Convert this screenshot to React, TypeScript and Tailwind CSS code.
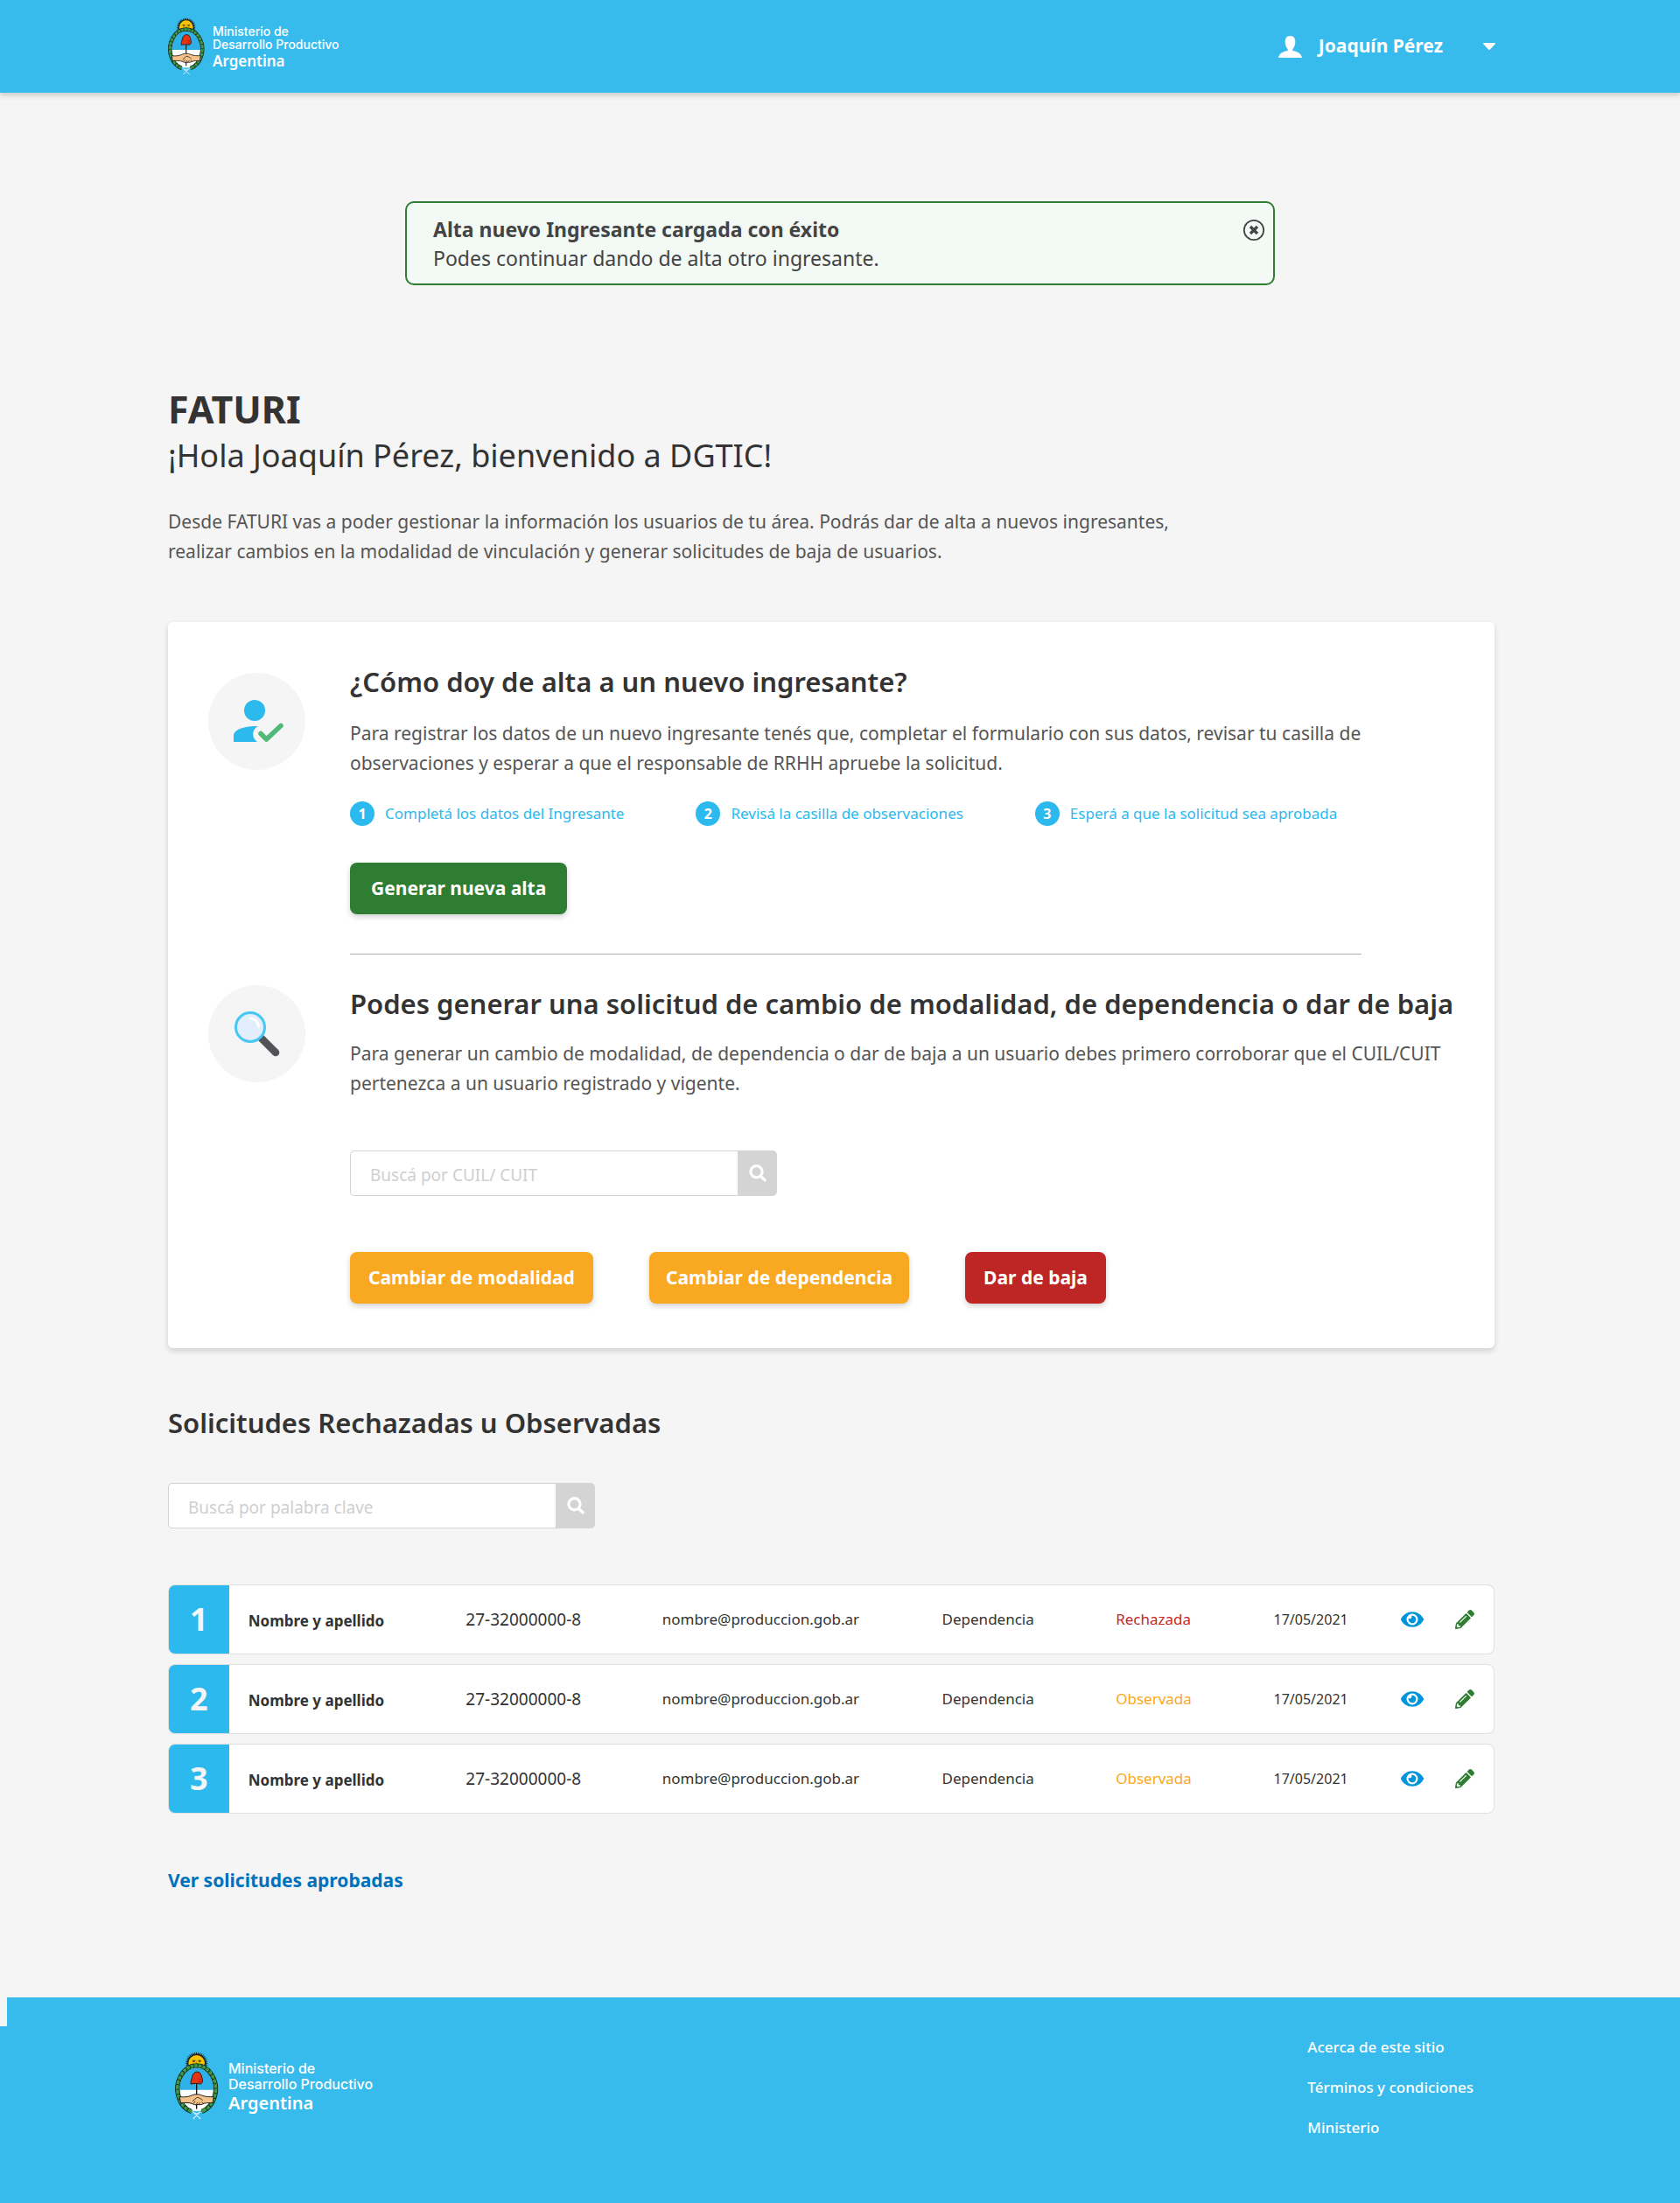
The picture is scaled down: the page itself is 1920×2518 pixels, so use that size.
import type { ReactNode } from "react";
import { FaEye, FaPencilAlt } from "react-icons/fa";

const leaves = Array.from({ length: 30 }, (_, i) => {
  const angle = ((i + 0.5) / 30) * 2 * Math.PI;
  return {
    x: 74 + 66 * Math.sin(angle),
    y: 129 - 81 * Math.cos(angle),
    turn: (angle * 180) / Math.PI,
  };
}).filter((leaf) => leaf.y < 206);

const rays = Array.from({ length: 23 }, (_, i) => -110 + i * 10);

function Emblem({ className }: { className: string }) {
  return (
    <svg viewBox="0 0 150 236" className={className} aria-hidden="true">
      {rays.map((turn) => (
        <path key={turn} d="M70.5 14 L74 0 L77.5 14 Z" fill="#111" transform={`rotate(${turn} 74 40)`} />
      ))}
      <circle cx="74" cy="40" r="31" fill="#2b2410" />
      <circle cx="74" cy="40" r="28" fill="#f8c300" />
      <path d="M59 31h11M79 31h11M61 35h7M81 35h7" stroke="#1a1a1a" strokeWidth="2.5" />
      <path d="M74 32v7" stroke="#a87800" strokeWidth="2" />
      <ellipse cx="74" cy="129" rx="59" ry="77" fill="#fff" />
      <path d="M15 132a59 77 0 0 1 118 0z" fill="#2fb1e8" />
      <path d="M56 207a66 81 0 1 1 36 0" fill="none" stroke="#10251b" strokeWidth="16" />
      <path d="M56 207a66 81 0 1 1 36 0" fill="none" stroke="#3f9a4a" strokeWidth="11" />
      {leaves.map((leaf) => (
        <path
          key={leaf.turn}
          d="M-5 -6 L0 0 L-5 6"
          fill="none"
          stroke="#10251b"
          strokeWidth="2.5"
          transform={`translate(${leaf.x} ${leaf.y}) rotate(${leaf.turn})`}
        />
      ))}
      <path d="M74 110v88" stroke="#111" strokeWidth="4" />
      <path
        d="M54 112c-1-8 2-12 4-22 2-13 9-20 18-20 8 0 13 6 15 14 1 6 4 12 4 18-1 5-4 9-8 10-12-3-22-2-33 0z"
        fill="#e63413"
        stroke="#1a1a1a"
        strokeWidth="3"
      />
      <path d="M80 92c4 4 7 4 11 4M78 102c5 3 9 3 13 2" fill="none" stroke="#7a1206" strokeWidth="2" />
      <path
        d="M15 156c14 2 26 1 38-3 8-4 15-6 21-5 7-1 13 1 20 4 12 4 25 5 39 4l-3 21c-12 0-21 0-30 2-8 5-14 5-22 4-9 3-15-1-21-4-12-3-24-2-38-2z"
        fill="#f4c189"
        stroke="#1a1a1a"
        strokeWidth="3"
      />
      <path d="M60 172l13-12c7-4 13 2 22 8M62 180l8-8M71 184l8-9M80 184l7-8M92 174l6 5" fill="none" stroke="#1a1a1a" strokeWidth="2.5" />
      <path d="M60 209l14 6 14-6M62 233l12-13 14 13M66 215h16" fill="none" stroke="#d9f2ff" strokeWidth="3.5" />
    </svg>
  );
}

function SearchIcon() {
  return (
    <svg viewBox="0 0 20 20" className="size-5" fill="none" stroke="#fff" strokeLinecap="round" aria-hidden="true">
      <circle cx="8.5" cy="8.2" r="6.6" strokeWidth="3.2" />
      <path d="M13.8 13.8l4.2 4" strokeWidth="3.4" />
    </svg>
  );
}

function SearchBox({ id, placeholder }: { id: string; placeholder: string }) {
  return (
    <form className="flex h-[52px] w-full max-w-[488px]" onSubmit={(e) => e.preventDefault()}>
      <label htmlFor={id} className="absolute size-px overflow-hidden opacity-0">Buscar</label>
      <input
        id={id}
        type="text"
        placeholder={placeholder}
        className="min-w-0 flex-1 rounded-l-[5px] border border-r-0 border-[#ced4da] bg-white px-[22px] pt-1 text-[19px] leading-8 text-[#333] outline-none placeholder:text-[#cfcfcf]"
      />
      <button type="submit" aria-label="Buscar" className="flex w-[45px] items-center justify-center rounded-r-[5px] bg-[#d4d4d4]">
        <SearchIcon />
      </button>
    </form>
  );
}

function Disc({ children }: { children: ReactNode }) {
  return (
    <div className="mt-[11px] flex size-[111px] shrink-0 items-center justify-center rounded-full bg-[#f5f5f5]">
      {children}
    </div>
  );
}

const buttonBase =
  "h-[59px] rounded-lg text-[21px] font-bold text-white shadow-[0_3px_6px_rgba(0,0,0,0.18)]";

const headingBase = "text-[31px] leading-[42px] font-[650]";

const steps = [
  "Completá los datos del Ingresante",
  "Revisá la casilla de observaciones",
  "Esperá a que la solicitud sea aprobada",
];

const requests = [
  { id: 1, status: "Rechazada" },
  { id: 2, status: "Observada" },
  { id: 3, status: "Observada" },
];

const cell = "h-20 border-y border-[#e0e0e0] bg-white p-0 pl-[22px]";

export default function App() {
  return (
    <div className="bg-[#f5f5f5] font-['Noto_Sans',sans-serif] text-[#333]">
      <header className="flex h-[106px] items-center justify-between bg-[#37bbed] pr-[211px] pl-48 shadow-[0_3px_6px_rgba(0,0,0,0.18)]">
        <a href="#inicio" className="flex items-start gap-[9px] text-white">
          <Emblem className="h-[66px] w-[42px]" />
          <span className="mt-2 flex flex-col font-['Inter',sans-serif] text-sm leading-[15px] font-medium">
            <span>Ministerio de</span>
            <span>Desarrollo Productivo</span>
            <span className="mt-0.5 font-['Noto_Sans',sans-serif] text-[17px] leading-5 font-semibold">Argentina</span>
          </span>
        </a>
        <button type="button" className="flex items-center text-white">
          <svg viewBox="0 0 27 25" className="h-[25px] w-[27px]" fill="currentColor" aria-hidden="true">
            <path d="M13.5 0C17.5 0 19.5 2.8 19.3 7c-.1 4-1.500 6.500-3 8.300v1.700c4.500.6 10 2.800 10.700 8H0c.7-5.200 6.200-7.400 10.700-8v-1.700c-1.500-1.800-2.900-4.300-3-8.300C7.500 2.800 9.500 0 13.500 0z" />
          </svg>
          <span className="ml-[19px] text-[21px] font-bold">Joaquín Pérez</span>
          <svg viewBox="0 0 14 9" className="ml-[46px] h-[9px] w-3.5" fill="currentColor" aria-hidden="true">
            <path d="M1 0h12c1 0 1.300.9.600 1.600l-5.600 6c-.6.6-1.400.6-2 0l-5.600-6C-.3.9 0 0 1 0z" />
          </svg>
        </button>
      </header>

      <div role="status" className="mx-auto mt-[124px] flex w-full max-w-[994px] items-start justify-between rounded-[10px] border-2 border-[#2e7d32] bg-[#f3f9f4] pt-3.5 pr-[9px] pb-3 pl-[30px] text-[23px] leading-[33px] text-[#444]">
        <div>
          <p className="font-bold">Alta nuevo Ingresante cargada con éxito</p>
          <p>Podes continuar dando de alta otro ingresante.</p>
        </div>
        <button type="button" aria-label="Cerrar" className="mt-1 text-[#444]">
          <svg viewBox="0 0 26 26" className="size-[26px]" fill="none" stroke="currentColor" aria-hidden="true">
            <circle cx="13" cy="13" r="11.200" strokeWidth="1.800" />
            <path d="M9 9l8 8M17 9l-8 8" strokeWidth="3.300" />
          </svg>
        </button>
      </div>

      <main className="pr-[212px] pl-48">
        <h1 className="mt-[115px] text-[43px] leading-[54px] font-bold">FATURI</h1>
        <p className="text-4xl leading-[52px]">¡Hola Joaquín Pérez, bienvenido a DGTIC!</p>
        <p className="mt-8 max-w-[1190px] text-[21px] leading-[34px] text-[#555]">
          Desde FATURI vas a poder gestionar la información los usuarios de tu área. Podrás dar de alta a nuevos
          ingresantes, realizar cambios en la modalidad de vinculación y generar solicitudes de baja de usuarios.
        </p>

        <div className="mt-16 rounded-md bg-white pt-[47px] pb-[51px] pl-[46px] shadow-[0_3px_6px_rgba(0,0,0,0.16)]">
          <section className="flex items-start gap-[51px]">
            <Disc>
              <svg viewBox="0 0 58 50" className="ml-1 h-[50px] w-[58px]" fill="none" aria-hidden="true">
                <circle cx="24" cy="12" r="12" fill="#2cb9ee" />
                <path d="M0 48v-7c0-7 12-11 24-11h3.500c-7 5-7 13-.5 18z" fill="#2cb9ee" />
                <path d="M31 38.500l6.500 6.500L54 29.500" stroke="#50b978" strokeWidth="5.500" strokeLinecap="round" strokeLinejoin="round" />
              </svg>
            </Disc>
            <div className="flex-1">
              <h2 className={headingBase}>¿Cómo doy de alta a un nuevo ingresante?</h2>
              <p className="mt-[21px] max-w-[1250px] text-[21px] leading-[34px] text-[#555]">
                Para registrar los datos de un nuevo ingresante tenés que, completar el formulario con sus datos,
                revisar tu casilla de observaciones y esperar a que el responsable de RRHH apruebe la solicitud.
              </p>
              <ol className="mt-[27px] flex gap-[82px]">
                {steps.map((step, i) => (
                  <li key={step} className="flex items-center gap-3 text-[17px] leading-7 text-[#2cb9ee]">
                    <span className="flex size-7 items-center justify-center rounded-full bg-[#2cb9ee] text-base font-bold text-white">
                      {i + 1}
                    </span>
                    {step}
                  </li>
                ))}
              </ol>
              <button type="button" className={`${buttonBase} mt-[42px] bg-[#2e7d32] px-6`}>
                Generar nueva alta
              </button>
              <hr className="mt-[45px] max-w-[1156px] border-[#b3b3b3]" />
            </div>
          </section>

          <section className="mt-6 flex items-start gap-[51px]">
            <Disc>
              <svg viewBox="0 0 52 52" className="size-[52px]" fill="none" aria-hidden="true">
                <path d="M29.500 29.500L47 47" stroke="#545358" strokeWidth="8.500" />
                <circle cx="47" cy="47" r="4.300" fill="#545358" />
                <circle cx="18" cy="18" r="16.500" fill="#e3eefd" stroke="#45c7f1" strokeWidth="3" />
                <path d="M18.500 8c5 .5 8.500 4 9 9" stroke="#fff" strokeWidth="3" strokeLinecap="round" />
              </svg>
            </Disc>
            <div className="mt-[11px] flex-1">
              <h2 className={headingBase}>
                Podes generar una solicitud de cambio de modalidad, de dependencia o dar de baja
              </h2>
              <p className="mt-[19px] max-w-[1250px] text-[21px] leading-[34px] text-[#555]">
                Para generar un cambio de modalidad, de dependencia o dar de baja a un usuario debes primero corroborar
                que el CUIL/CUIT pertenezca a un usuario registrado y vigente.
              </p>
              <div className="mt-[60px]">
                <SearchBox id="buscar-cuil" placeholder="Buscá por CUIL/ CUIT" />
              </div>
              <div className="mt-16 flex gap-16">
                <button type="button" className={`${buttonBase} bg-[#f9a822] px-[21px]`}>Cambiar de modalidad</button>
                <button type="button" className={`${buttonBase} bg-[#f9a822] px-[19px]`}>Cambiar de dependencia</button>
                <button type="button" className={`${buttonBase} bg-[#be2625] px-[21px]`}>Dar de baja</button>
              </div>
            </div>
          </section>
        </div>

        <h2 className={`${headingBase} mt-16`}>Solicitudes Rechazadas u Observadas</h2>
        <div className="mt-12">
          <SearchBox id="buscar-palabra" placeholder="Buscá por palabra clave" />
        </div>

        <table className="mt-[53px] w-full table-fixed border-separate border-spacing-x-0 border-spacing-y-[11px] text-left text-[17px]">
          <colgroup>
            <col className="w-[4.6%]" />
            <col className="w-[16.4%]" />
            <col className="w-[14.8%]" />
            <col className="w-[21.1%]" />
            <col className="w-[13.1%]" />
            <col className="w-[11.9%]" />
            <col className="w-[9.6%]" />
            <col className="w-[4.1%]" />
            <col className="w-[4.4%]" />
          </colgroup>
          <tbody>
            {requests.map(({ id, status }) => (
              <tr key={id}>
                <td className="h-20 rounded-l-lg border border-r-0 border-[#e0e0e0] bg-[#2cb9ee] p-0 text-center text-4xl font-bold text-[#f5f5f5]">
                  {id}
                </td>
                <th scope="row" className={`${cell} pt-1 font-bold`}>Nombre y apellido</th>
                <td className={`${cell} text-[19px]`}>27-32000000-8</td>
                <td className={cell}>nombre@produccion.gob.ar</td>
                <td className={cell}>Dependencia</td>
                <td className={`${cell} ${status === "Rechazada" ? "text-[#c62828]" : "text-[#f9a822]"}`}>{status}</td>
                <td className={`${cell} text-base`}>17/05/2021</td>
                <td className={cell}>
                  <button type="button" aria-label={`Ver solicitud ${id}`} className="block text-[26px] text-[#0095da]">
                    <FaEye />
                  </button>
                </td>
                <td className={`${cell} rounded-r-lg border-r`}>
                  <button type="button" aria-label={`Editar solicitud ${id}`} className="block text-[22px] text-[#2e7d32]">
                    <FaPencilAlt />
                  </button>
                </td>
              </tr>
            ))}
          </tbody>
        </table>

        <a href="#aprobadas" className="mt-[50px] inline-block text-[21px] leading-[30px] font-bold text-[#0072bb]">
          Ver solicitudes aprobadas
        </a>
      </main>

      <footer className="relative mt-[119px] flex h-[235px] items-start justify-between bg-[#37bbed] pr-[236px] pl-[200px] text-white">
        <span className="absolute top-0 left-0 h-[33px] w-2 bg-[#f5f5f5]" />
        <a href="#inicio" className="mt-[62px] flex items-start gap-[11px]">
          <Emblem className="h-[78px] w-[50px]" />
          <span className="mt-2.5 flex flex-col font-['Inter',sans-serif] text-base leading-[18px] font-medium">
            <span>Ministerio de</span>
            <span>Desarrollo Productivo</span>
            <span className="mt-px font-['Noto_Sans',sans-serif] text-xl leading-6 font-semibold">Argentina</span>
          </span>
        </a>
        <nav className="mt-[45px] flex flex-col gap-[22px] text-[17px] leading-6 font-medium">
          <a href="#acerca">Acerca de este sitio</a>
          <a href="#terminos">Términos y condiciones</a>
          <a href="#ministerio">Ministerio</a>
        </nav>
      </footer>
    </div>
  );
}
